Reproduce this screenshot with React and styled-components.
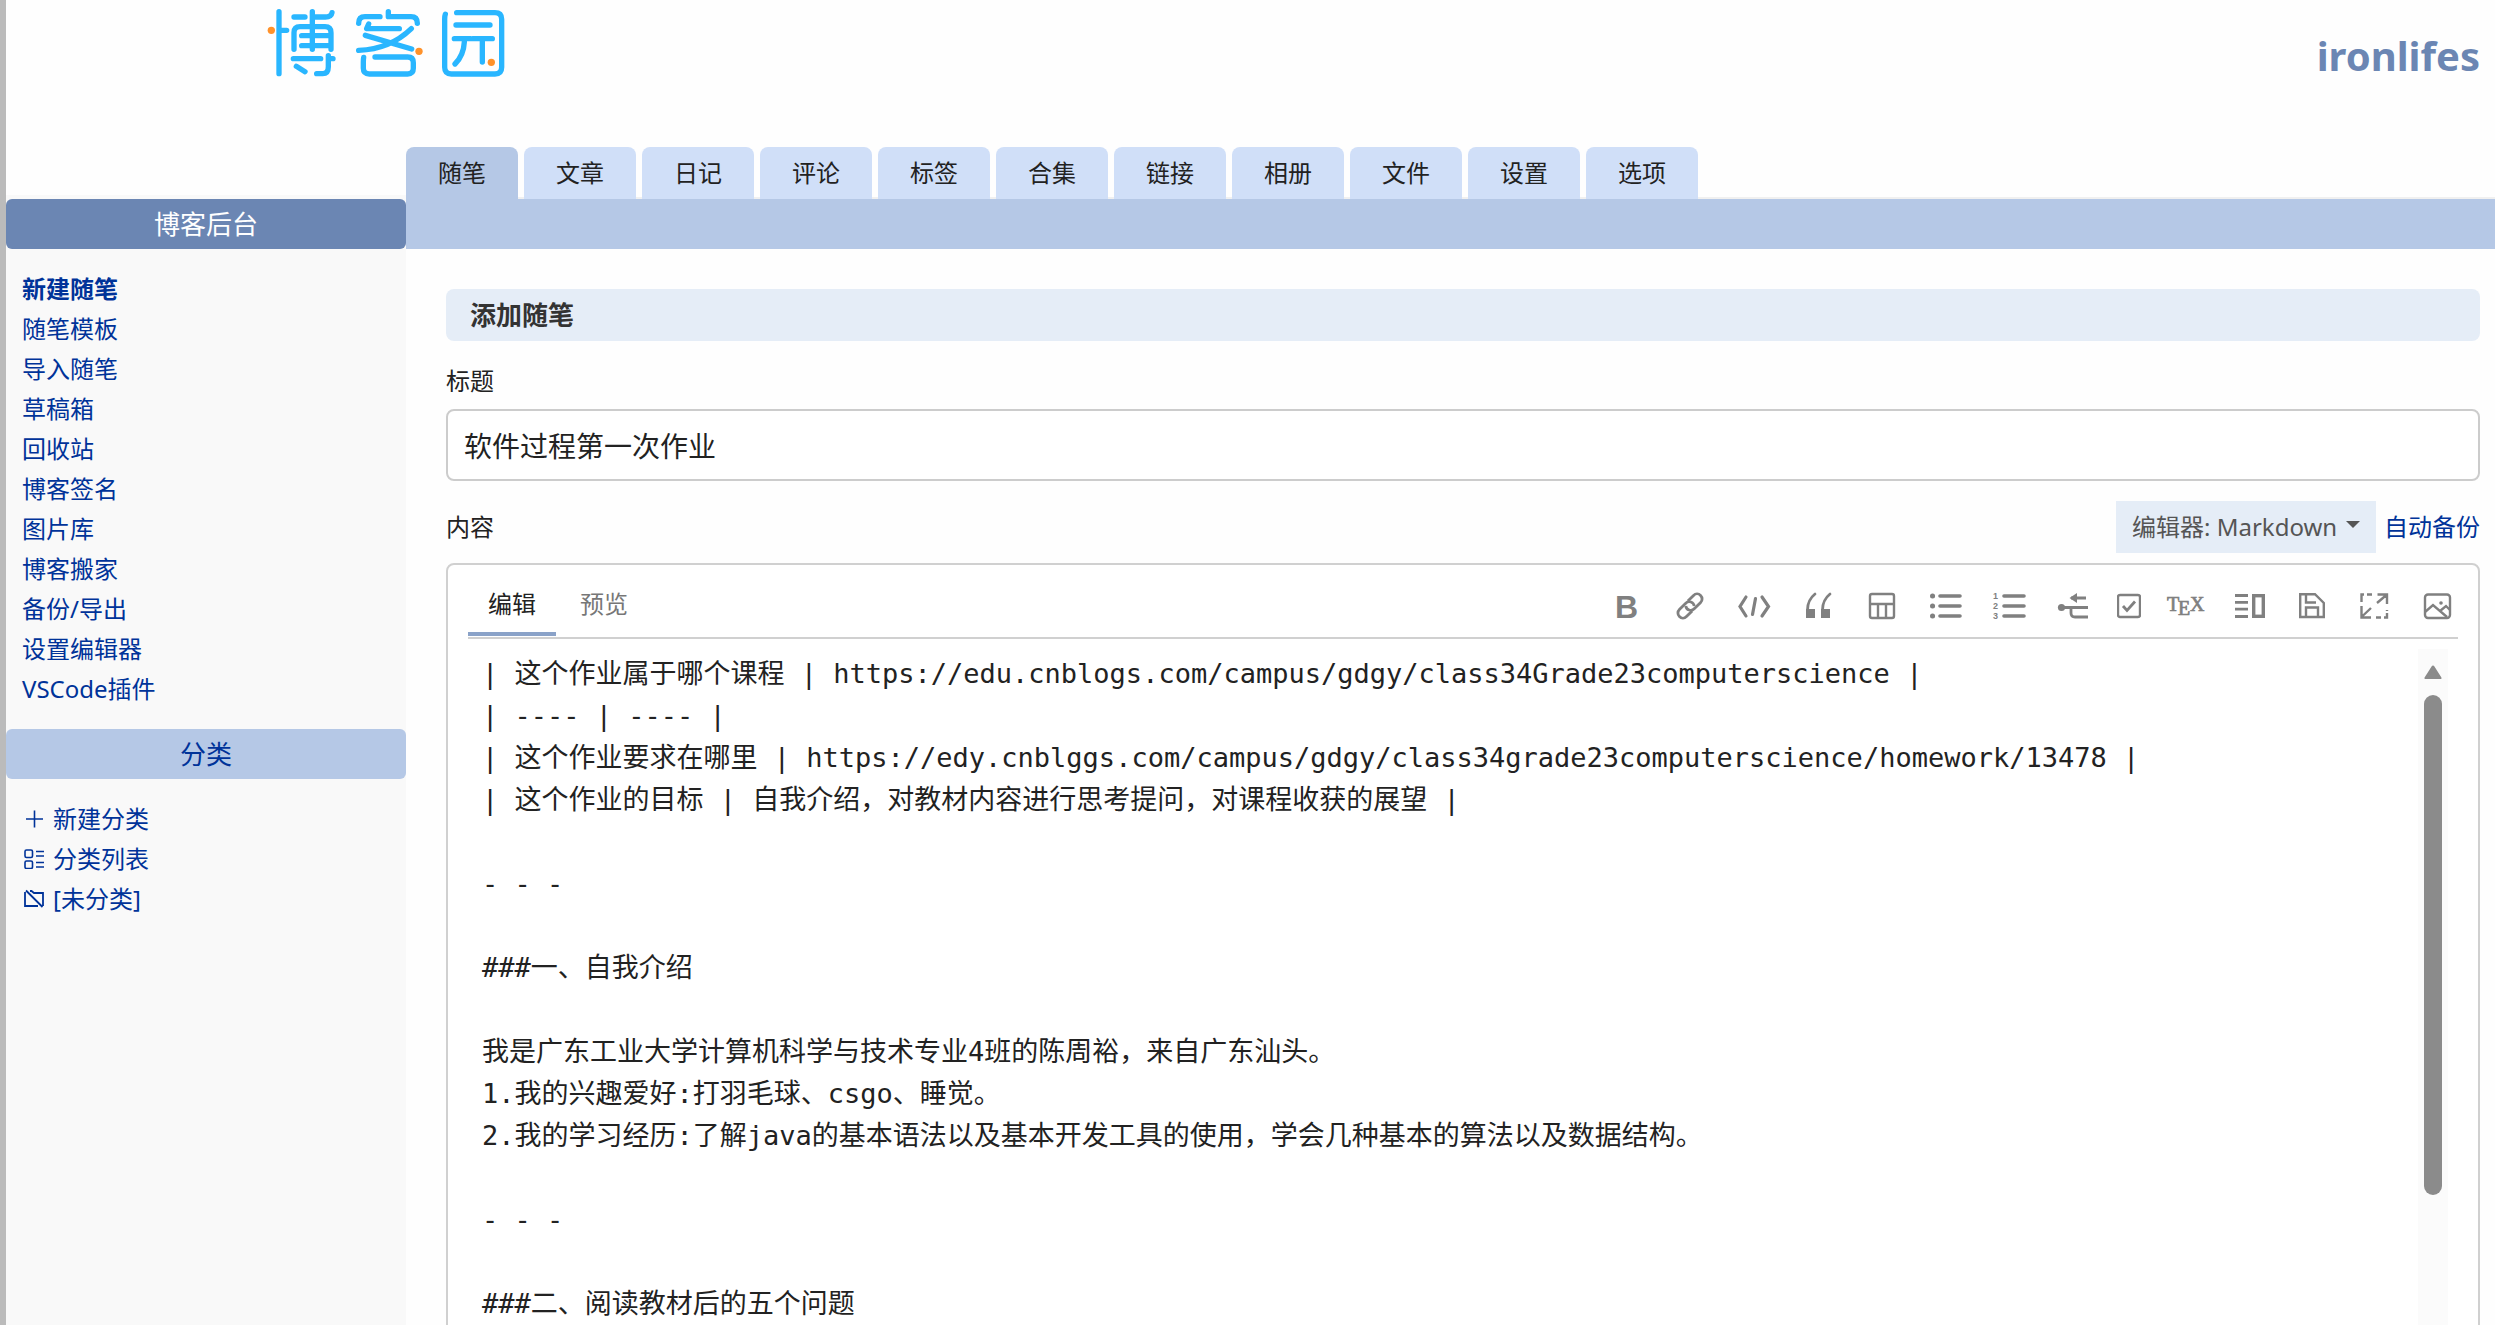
import React, { useState } from 'react';
import styled, { createGlobalStyle } from 'styled-components';

const GlobalStyle = createGlobalStyle`
    * {
        box-sizing: border-box;
    }

    body {
        margin: 0;
        background: #fefefe;
        color: #222;
        font-family: "Noto Sans", "Noto Sans CJK SC", sans-serif;
        font-size: 24px;
        line-height: 36px;
    }

    a {
        color: #039;
        text-decoration: none;
    }

    button, input, select, textarea {
        font: inherit;
        color: inherit;
    }
`;

const Page = styled.div`
    display: flex;
    flex-direction: column;
    height: 100vh;
    overflow: hidden;
    border-left: 6px solid #bbb;
`;

const Header = styled.header`
    display: flex;
    justify-content: space-between;
    align-items: flex-start;
    flex: none;
    height: 147px;
    padding: 0 15px 0 254px;
`;

const BlogName = styled.h1`
    margin: 0;
    font-size: 40px;
    line-height: 112px;

    a {
        color: #6b86b3;
    }
`;

const TabBar = styled.nav`
    display: flex;
    flex: none;
    gap: 6px;
    padding-left: 400px;
    box-shadow: inset 0 -2px #f0f0f0;
`;

const Tab = styled.a`
    width: 112px;
    padding: 8px 0;
    border-radius: 8px 8px 0 0;
    background: ${({ $active }) => ($active ? '#b5c8e6' : '#d0dff8')};
    color: #222;
    text-align: center;
`;

const Body = styled.div`
    display: grid;
    grid-template-columns: 400px 1fr;
    flex: 1;
    min-height: 0;
`;

const Sidebar = styled.aside`
    margin-top: -4px;
    padding-top: 4px;
    background: #f9f9f9;
`;

const SideTitle = styled.h2`
    margin: 0;
    border-radius: 6px;
    background: ${({ $light }) => ($light ? '#b5c8e6' : '#6b86b3')};
    color: ${({ $light }) => ($light ? '#039' : '#fff')};
    font-size: 26px;
    font-weight: 400;
    line-height: 50px;
    text-align: center;
`;

const SideList = styled.ul`
    margin: 0;
    padding: 20px 16px;
    list-style: none;
    line-height: 40px;
`;

const SideLink = styled.a`
    display: flex;
    align-items: center;
    gap: 9px;
    font-weight: ${({ $bold }) => ($bold ? 700 : 400)};

    svg {
        margin-left: 2px;
    }
`;

const Main = styled.main`
    min-width: 0;
`;

const Band = styled.div`
    height: 50px;
    background: #b5c8e6;
`;

const Content = styled.div`
    padding: 40px 15px 0 40px;
`;

const PanelTitle = styled.h3`
    margin: 0;
    padding: 0 24px;
    border-radius: 8px;
    background: #e5edf7;
    color: #333;
    font-size: 26px;
    line-height: 52px;
`;

const TitleLabel = styled.label`
    display: block;
    margin: 22px 0 10px;
`;

const TitleInput = styled.input`
    display: block;
    width: 100%;
    height: 72px;
    padding: 0 16px;
    border: 2px solid #ccc;
    border-radius: 8px;
    background: #fff;
    font-size: 28px;
`;

const ContentHead = styled.div`
    display: flex;
    align-items: center;
    gap: 8px;
    margin: 20px 0 10px;

    label {
        flex: 1;
    }
`;

const SelectBox = styled.div`
    display: grid;
    align-items: center;
    width: 260px;

    select, svg {
        grid-area: 1 / 1;
    }

    svg {
        justify-self: end;
        margin-right: 16px;
        pointer-events: none;
    }
`;

const EditorSelect = styled.select`
    appearance: none;
    height: 52px;
    padding: 0 16px;
    border: 0;
    border-radius: 0;
    background: #e5edf7;
    color: #555;
`;

const Editor = styled.section`
    padding: 0 20px;
    border: 2px solid #d0d0d0;
    border-radius: 8px;
    background: #fff;
`;

const Toolbar = styled.div`
    display: flex;
    align-items: center;
    height: 74px;
    padding: 10px 5px 0 0;
    border-bottom: 2px solid #d0d0d0;
`;

const Modes = styled.div`
    display: flex;
    flex: 1;
    gap: 4px;
`;

const ModeButton = styled.button`
    height: 60px;
    padding: 0 20px;
    border: 0;
    border-bottom: 4px solid ${({ $active }) => ($active ? '#8aa2c8' : 'transparent')};
    background: none;
    color: ${({ $active }) => ($active ? '#222' : '#777')};
`;

const Tools = styled.div`
    display: flex;
    gap: 24px;
`;

const ToolButton = styled.button`
    display: flex;
    padding: 0;
    border: 0;
    background: none;
    color: #808080;
    cursor: pointer;
`;

const Writing = styled.div`
    display: flex;
    padding: 10px 10px 0 0;
`;

const TextArea = styled.textarea`
    flex: 1;
    padding: 4px 14px;
    border: 0;
    outline: none;
    overflow: hidden;
    resize: none;
    background: none;
    font-family: "DejaVu Sans Mono", "Noto Sans CJK SC", monospace;
    font-size: 27px;
    line-height: 42px;
`;

const ScrollTrack = styled.div`
    display: flex;
    flex-direction: column;
    align-items: center;
    gap: 16px;
    width: 30px;
    padding-top: 16px;
    background: #fbfbfb;
`;

const ScrollThumb = styled.div`
    width: 18px;
    height: 500px;
    border-radius: 9px;
    background: #8b8b8b;
`;

const tabs = ['随笔', '文章', '日记', '评论', '标签', '合集', '链接', '相册', '文件', '设置', '选项'];

const sideLinks = [
    '新建随笔', '随笔模板', '导入随笔', '草稿箱', '回收站', '博客签名',
    '图片库', '博客搬家', '备份/导出', '设置编辑器', 'VSCode插件',
];

const draft = `| 这个作业属于哪个课程 | https://edu.cnblogs.com/campus/gdgy/class34Grade23computerscience |
| ---- | ---- |
| 这个作业要求在哪里 | https://edy.cnblggs.com/campus/gdgy/class34grade23computerscience/homework/13478 |
| 这个作业的目标 | 自我介绍，对教材内容进行思考提问，对课程收获的展望 |

- - -

###一、自我介绍

我是广东工业大学计算机科学与技术专业4班的陈周裕，来自广东汕头。
1.我的兴趣爱好:打羽毛球、csgo、睡觉。
2.我的学习经历:了解java的基本语法以及基本开发工具的使用，学会几种基本的算法以及数据结构。

- - -

###二、阅读教材后的五个问题`;

function Logo() {
    return (
        <svg width="260" height="90" viewBox="0 0 780 270" fill="none" stroke="#29b6ff" strokeWidth="16" strokeLinecap="round" strokeLinejoin="round" role="img" aria-label="博客园">
            <path d="M57 35V221M57 91H80M102 51H135M157 35V148M157 51H196Q214 51 216 38" />
            <path d="M102 148V98Q102 80 120 80H195Q213 80 213 98V148M125 107H206M125 137H206" />
            <path d="M100 176H182M205 167V200Q205 221 188 221H170M205 176H219M109 199L135 215" />
            <path d="M296 70Q296 50 315 50H360M385 35V50H453Q472 50 472 70" />
            <path d="M326 72L320 86H418M316 106L455 147M454 86Q390 148 296 151" />
            <path d="M345 171H443Q460 171 460 188V205Q460 222 443 222H328Q310 222 310 205V186Q310 178 311 172" />
            <path d="M590 38H705Q725 38 725 58V202Q725 222 705 222H574Q554 222 554 202V58Q554 48 556 43" />
            <path d="M588 75H690M583 116H632M613 116V126Q611 166 585 192M638 116H697M667 116V186" />
            <g fill="#ff922b" stroke="none">
                <circle cx="34" cy="91" r="11" />
                <circle cx="477" cy="154" r="11" />
                <circle cx="694" cy="187" r="11" />
            </g>
        </svg>
    );
}

function PlusIcon() {
    return (
        <svg width="20" height="20" fill="none" stroke="currentColor" strokeWidth="1.6">
            <path d="M2 10H19M10.5 1.5V18.5" />
        </svg>
    );
}

function ListIcon() {
    return (
        <svg width="20" height="20" fill="none" stroke="currentColor" strokeWidth="1.6">
            <rect x="1" y="1" width="7.5" height="7.5" rx="1.5" />
            <rect x="1" y="12" width="7.5" height="7.5" rx="1.5" />
            <path d="M12 2.5H20M12 7H20M12 13.5H20M12 18H20" />
        </svg>
    );
}

function FolderOffIcon() {
    return (
        <svg width="20" height="20" fill="none" stroke="currentColor" strokeWidth="1.8">
            <path d="M1 3V17H14M6 2H7.5L10 4H19V17M2 1.5L18.5 18" />
        </svg>
    );
}

// each drawing sits in a 40px high box, widths differ a little
const tools = [
    {
        name: '粗体',
        art: <text x="10" y="32" fontFamily="Liberation Sans, sans-serif" fontWeight="700" fontSize="32" fill="currentColor" stroke="none">B</text>,
    },
    {
        name: '链接',
        art: (
            <g transform="translate(21 20) rotate(-45)" strokeWidth="2.8">
                <path d="M-2 5H-10A5 5 0 0 1 -10 -5H-1A5 5 0 0 1 3 3" />
                <path d="M2 -5H10A5 5 0 0 1 10 5H1A5 5 0 0 1 -3 -3" />
            </g>
        ),
    },
    {
        name: '代码',
        art: <path d="M13 11L7 20.500L13 30M29 11L35.500 20.500L29 30M22.500 12.500L19.500 28.500" strokeWidth="3.2" strokeLinecap="round" />,
    },
    {
        name: '引用',
        art: (
            <>
                <path d="M18 8Q10.500 14 10.500 24M33 8Q25.500 14 25.500 24" strokeWidth="2.8" strokeLinecap="round" />
                <path d="M9 23H18V32H9ZM24 23H33V32H24Z" fill="currentColor" stroke="none" />
            </>
        ),
    },
    {
        name: '表格',
        art: (
            <>
                <rect x="9" y="8" width="24" height="24" rx="2" />
                <path d="M9 18H33M17 18V32M25 18V32" />
            </>
        ),
    },
    {
        name: '无序列表',
        art: (
            <>
                <path d="M15 10H35M15 20H35M15 30H35" strokeWidth="3.6" strokeLinecap="round" />
                <path d="M7.500 10H7.600M7.500 20H7.600M7.500 30H7.600" strokeWidth="5" strokeLinecap="round" />
            </>
        ),
    },
    {
        name: '有序列表',
        art: (
            <>
                <path d="M15 10H35M15 20H35M15 30H35" strokeWidth="3.6" strokeLinecap="round" />
                <g fontFamily="Liberation Sans, sans-serif" fontWeight="700" fontSize="9" fill="currentColor" stroke="none">
                    <text x="4" y="13">1</text>
                    <text x="4" y="23">2</text>
                    <text x="4" y="33">3</text>
                </g>
            </>
        ),
    },
    {
        name: '流程图',
        art: (
            <>
                <path d="M8 21.500H35M18 12H33M18 21.500V27Q18 31 22 31H35" strokeWidth="2.8" />
                <circle cx="8.500" cy="21.500" r="3.600" fill="currentColor" stroke="none" />
                <path d="M16.500 12L24 7V17Z" fill="currentColor" stroke="none" />
            </>
        ),
    },
    {
        name: '任务列表',
        width: 24,
        art: (
            <>
                <rect x="1" y="9" width="22" height="22" rx="2" />
                <path d="M6 20L10 24.500L18 15.500" strokeWidth="2.8" />
            </>
        ),
    },
    {
        name: '公式',
        art: (
            <g fontFamily="Liberation Serif, serif" fontSize="20" fill="currentColor" strokeWidth="0.7">
                <text x="2" y="25">T</text>
                <text x="13" y="29">E</text>
                <text x="25" y="25">X</text>
            </g>
        ),
    },
    {
        name: '分栏',
        art: (
            <>
                <path d="M6 9.500H19M6 16.300H19M6 23.200H19M6 30.500H19" strokeWidth="2.8" />
                <rect x="24.700" y="9.700" width="9.600" height="20.600" strokeWidth="3.400" />
            </>
        ),
    },
    {
        name: '保存',
        art: <path d="M7.200 8.200H22L30.800 17V31H7.200ZM13 8.200V16.500H23M13 31V21.500H25V31" />,
    },
    {
        name: '全屏',
        art: (
            <path d="M4.500 16V8.500H7M10 8.500H15M20 17L30 8.500M20.500 8.500H30V18M30 24V25M30 27V31.500H27M24 31.500H19M4.500 20V31.500H14M4.500 31L14 22" />
        ),
    },
    {
        name: '图片',
        width: 32,
        art: (
            <>
                <rect x="4" y="8.500" width="25" height="23.500" rx="3" />
                <path d="M4 26L12 19L26 31M19 25L25 20L29 24" />
                <circle cx="20" cy="17" r="1.800" fill="currentColor" stroke="none" />
            </>
        ),
    },
];

function App() {
    const [title, setTitle] = useState('软件过程第一次作业');
    const [text, setText] = useState(draft);
    const [mode, setMode] = useState('编辑');

    return (
        <Page>
            <GlobalStyle />
            <Header>
                <a href="#home"><Logo /></a>
                <BlogName><a href="#blog">ironlifes</a></BlogName>
            </Header>
            <TabBar>
                {tabs.map((tab, i) => (
                    <Tab key={tab} href="#tab" $active={i === 0}>{tab}</Tab>
                ))}
            </TabBar>
            <Body>
                <Sidebar>
                    <SideTitle>博客后台</SideTitle>
                    <SideList>
                        {sideLinks.map((link, i) => (
                            <li key={link}><SideLink href="#link" $bold={i === 0}>{link}</SideLink></li>
                        ))}
                    </SideList>
                    <SideTitle $light>分类</SideTitle>
                    <SideList>
                        <li><SideLink href="#new"><PlusIcon />新建分类</SideLink></li>
                        <li><SideLink href="#list"><ListIcon />分类列表</SideLink></li>
                        <li><SideLink href="#none"><FolderOffIcon />[未分类]</SideLink></li>
                    </SideList>
                </Sidebar>
                <Main>
                    <Band />
                    <Content>
                        <PanelTitle>添加随笔</PanelTitle>
                        <TitleLabel htmlFor="title">标题</TitleLabel>
                        <TitleInput id="title" value={title} onChange={(e) => setTitle(e.target.value)} />
                        <ContentHead>
                            <label htmlFor="content">内容</label>
                            <SelectBox>
                                <EditorSelect aria-label="编辑器">
                                    <option>编辑器: Markdown</option>
                                </EditorSelect>
                                <svg width="14" height="16"><path d="M0 2H14L7 9Z" fill="#555" /></svg>
                            </SelectBox>
                            <a href="#backup">自动备份</a>
                        </ContentHead>
                        <Editor>
                            <Toolbar>
                                <Modes>
                                    {['编辑', '预览'].map((m) => (
                                        <ModeButton key={m} type="button" $active={mode === m} onClick={() => setMode(m)}>{m}</ModeButton>
                                    ))}
                                </Modes>
                                <Tools>
                                    {tools.map(({ name, width = 40, art }) => (
                                        <ToolButton key={name} type="button" aria-label={name}>
                                            <svg width={width} height="40" fill="none" stroke="currentColor" strokeWidth="2.400">{art}</svg>
                                        </ToolButton>
                                    ))}
                                </Tools>
                            </Toolbar>
                            <Writing>
                                <TextArea id="content" rows={24} spellCheck={false} value={text} onChange={(e) => setText(e.target.value)} />
                                <ScrollTrack>
                                    <svg width="18" height="14"><path d="M2 13H16L9 2Z" fill="#8b8b8b" stroke="#8b8b8b" strokeWidth="3" strokeLinejoin="round" /></svg>
                                    <ScrollThumb />
                                </ScrollTrack>
                            </Writing>
                        </Editor>
                    </Content>
                </Main>
            </Body>
        </Page>
    );
}

export default App;
